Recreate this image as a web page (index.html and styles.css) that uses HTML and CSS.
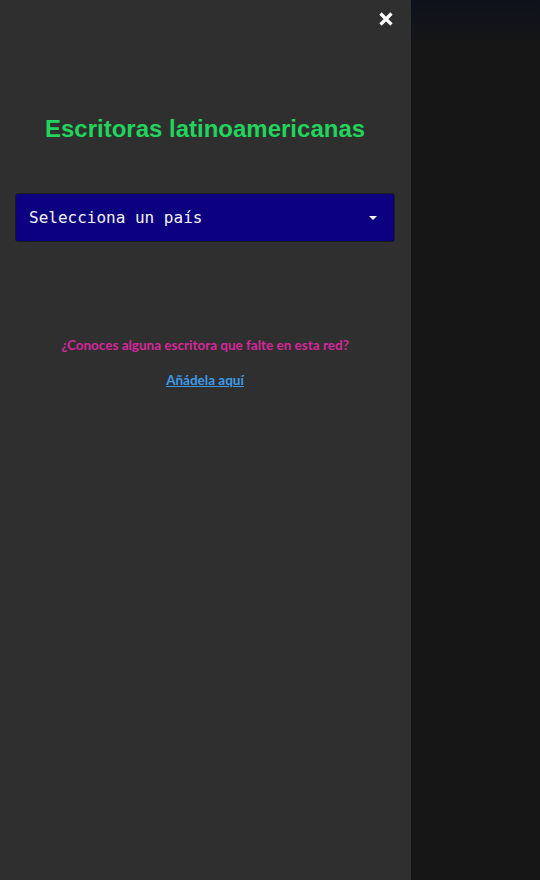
FILE: index.html
```html
<!DOCTYPE html>
<html lang="es">
<head>
<meta charset="utf-8">
<link rel="stylesheet" href="styles.css">
</head>
<body>
<div class="layout">
  <aside class="panel">
    <div class="close-row">
      <button class="close" aria-label="Cerrar">
        <svg width="16" height="16" viewBox="0 0 16 16"><path d="M2.5 2.5 L13.5 13.5 M13.5 2.5 L2.5 13.5" stroke="#fff" stroke-width="3.2" stroke-linecap="butt"/></svg>
      </button>
    </div>
    <h1 class="title">Escritoras latinoamericanas</h1>
    <div class="select">
      <span class="select-text">Selecciona un país</span>
      <svg class="caret" width="8" height="4" viewBox="0 0 8 4"><path d="M0 0 H8 L4 4 Z" fill="#fff"/></svg>
    </div>
    <p class="question">¿Conoces alguna escritora que falte en esta red?</p>
    <p class="add"><a href="#">Añádela aquí</a></p>
  </aside>
  <main class="canvas"></main>
</div>
</body>
</html>
```
FILE: styles.css
```css
html, body { margin: 0; padding: 0; height: 100%; }
body { background: #161616; font-family: "Liberation Sans", Arial, sans-serif; }
.layout { display: flex; height: 880px; }
.panel {
  width: 411px;
  flex: none;
  background: #2f2f2f;
  box-sizing: border-box;
  padding: 0 16px 0 15px;
  display: flex;
  flex-direction: column;
}
.canvas {
  flex: 1;
  background: linear-gradient(to bottom, #0e111c 0px, #161616 45px, #161616 100%);
}
.close-row { display: flex; justify-content: flex-end; padding-top: 11px; padding-right: 1px; }
.close { background: none; border: 0; padding: 0; width: 16px; height: 16px; display: block; cursor: pointer; }
.close svg { display: block; }
.title {
  margin: 88px 0 0;
  text-align: center;
  color: #22d35c;
  font-size: 24px;
  font-weight: bold;
  line-height: 28px;
}
.select {
  margin-top: 50px;
  height: 49px;
  box-sizing: border-box;
  background: #0c0080;
  border: 1px solid #1b1b1b;
  border-radius: 3px;
  display: flex;
  align-items: center;
  justify-content: space-between;
  padding: 0 17px 0 13px;
}
.select-text {
  color: #f2f2f2;
  font-family: "DejaVu Sans Mono", "Liberation Mono", monospace;
  font-size: 16px;
}
.caret { display: block; margin-top: 1px; }
.question {
  margin: 94px 0 0;
  text-align: center;
  color: #d6289c;
  font-family: Lato, "Open Sans", sans-serif;
  font-weight: bold;
  font-size: 13.5px;
  line-height: 18px;
}
.add {
  margin: 17px 0 0;
  text-align: center;
  font-family: Lato, "Open Sans", sans-serif;
  font-weight: bold;
  font-size: 13.5px;
  line-height: 18px;
}
.add a { color: #3d9be9; text-decoration: underline; }
```
